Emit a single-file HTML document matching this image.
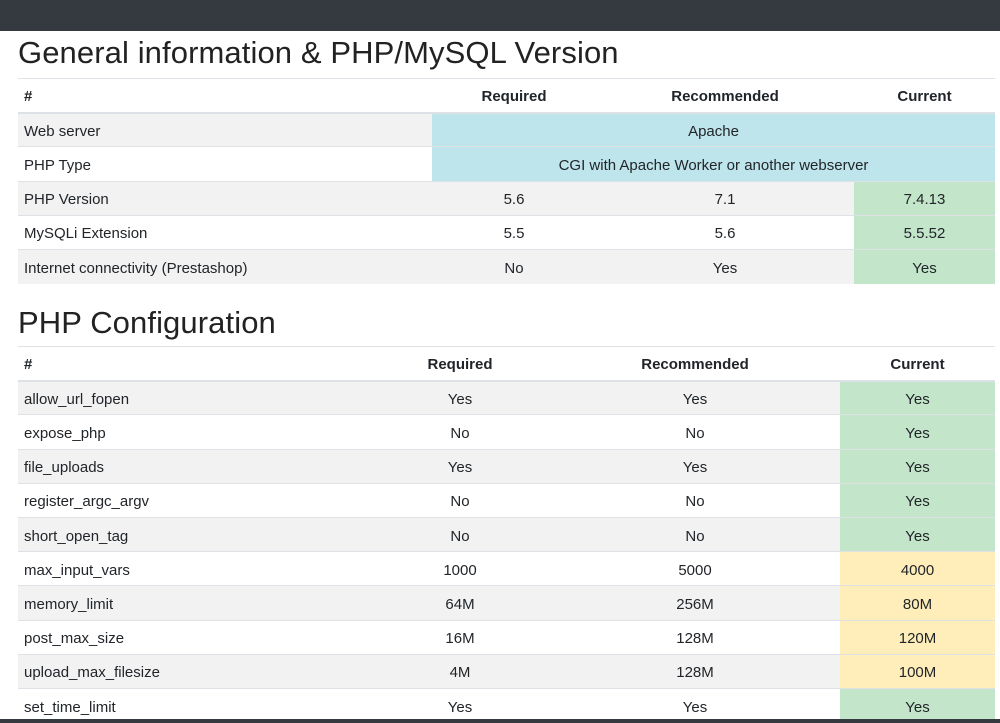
<!DOCTYPE html>
<html><head><style>
*{margin:0;padding:0;box-sizing:border-box}
body{width:1000px;height:723px;overflow:hidden;background:#fff;font-family:"Liberation Sans",sans-serif;color:#212529;position:relative}
.top{position:absolute;left:0;top:0;width:1000px;height:31px;background:#343a40}
.bot{position:absolute;left:0;top:719px;width:1000px;height:4px;background:#343a40}
h1{position:absolute;left:18px;font-weight:400;font-size:31px;color:#222;letter-spacing:0.1px}
table{position:absolute;left:18px;width:977px;border-collapse:collapse;font-size:15px;table-layout:fixed}
td,th{height:34.2px;padding:3px 6px 0;border-top:1px solid #dee2e6;text-align:center;vertical-align:middle}
th{font-weight:bold;border-bottom:2px solid #dee2e6}
td:first-child,th:first-child{text-align:left}
tr.s td{background:#f2f2f2}
td.i{background:#bee5eb!important}
td.g{background:#c3e6cb!important}
td.w{background:#ffeeba!important}
</style></head><body>
<div class="top"></div>
<h1 style="top:35px">General information &amp; PHP/MySQL Version</h1>
<table style="top:78px">
<colgroup><col style="width:414px"><col style="width:164px"><col style="width:258px"><col style="width:141px"></colgroup>
<tr><th>#</th><th>Required</th><th>Recommended</th><th>Current</th></tr>
<tr class="s"><td>Web server</td><td class="i" colspan="3">Apache</td></tr>
<tr><td>PHP Type</td><td class="i" colspan="3">CGI with Apache Worker or another webserver</td></tr>
<tr class="s"><td>PHP Version</td><td>5.6</td><td>7.1</td><td class="g">7.4.13</td></tr>
<tr><td>MySQLi Extension</td><td>5.5</td><td>5.6</td><td class="g">5.5.52</td></tr>
<tr class="s"><td>Internet connectivity (Prestashop)</td><td>No</td><td>Yes</td><td class="g">Yes</td></tr>
</table>
<h1 style="top:305px">PHP Configuration</h1>
<table style="top:346px">
<colgroup><col style="width:352px"><col style="width:180px"><col style="width:290px"><col style="width:155px"></colgroup>
<tr><th>#</th><th>Required</th><th>Recommended</th><th>Current</th></tr>
<tr class="s"><td>allow_url_fopen</td><td>Yes</td><td>Yes</td><td class="g">Yes</td></tr>
<tr><td>expose_php</td><td>No</td><td>No</td><td class="g">Yes</td></tr>
<tr class="s"><td>file_uploads</td><td>Yes</td><td>Yes</td><td class="g">Yes</td></tr>
<tr><td>register_argc_argv</td><td>No</td><td>No</td><td class="g">Yes</td></tr>
<tr class="s"><td>short_open_tag</td><td>No</td><td>No</td><td class="g">Yes</td></tr>
<tr><td>max_input_vars</td><td>1000</td><td>5000</td><td class="w">4000</td></tr>
<tr class="s"><td>memory_limit</td><td>64M</td><td>256M</td><td class="w">80M</td></tr>
<tr><td>post_max_size</td><td>16M</td><td>128M</td><td class="w">120M</td></tr>
<tr class="s"><td>upload_max_filesize</td><td>4M</td><td>128M</td><td class="w">100M</td></tr>
<tr><td>set_time_limit</td><td>Yes</td><td>Yes</td><td class="g">Yes</td></tr>
</table>
<div class="bot"></div>
</body></html>
